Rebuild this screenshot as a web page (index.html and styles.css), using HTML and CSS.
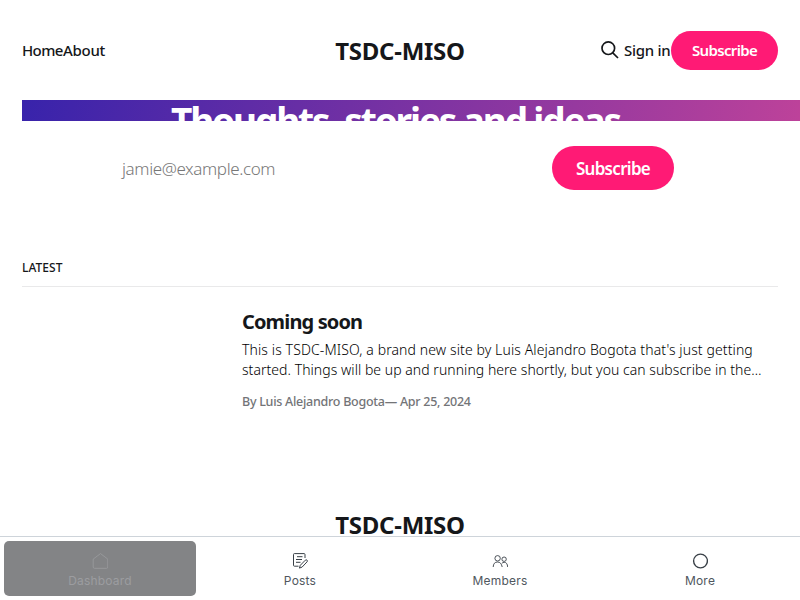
FILE: index.html
```html
<!DOCTYPE html>
<html lang="en">
<head>
<meta charset="utf-8">
<title>TSDC-MISO</title>
<link rel="stylesheet" href="styles.css">
</head>
<body>
<div class="site">
  <header class="header">
    <nav class="nav"><a class="home">Home</a><a class="about">About</a></nav>
    <div class="logo">TSDC-MISO</div>
    <div class="actions">
      <svg class="search" viewBox="0 0 20 20" fill="none" stroke="#15171a" stroke-width="1.7"><circle cx="8.3" cy="8.2" r="6.3"/><path d="M12.8 12.8 18 18"/></svg>
      <a class="signin">Sign in</a>
      <a class="button small"><span>Subscribe</span></a>
    </div>
  </header>
  <section class="cover"><h1><span>Thoughts, stories and ideas.</span></h1></section>
  <form class="signup">
    <span class="email">jamie@example.com</span>
    <a class="button large"><span>Subscribe</span></a>
  </form>
  <main class="latest">
    <h2 class="label"><span>LATEST</span></h2>
    <article class="post">
      <h3><span>Coming soon</span></h3>
      <p class="excerpt"><span class="line1">This is TSDC-MISO, a brand new site by Luis Alejandro Bogota that's just getting</span><br><span class="line2">started. Things will be up and running here shortly, but you can subscribe in the…</span></p>
      <p class="meta"><span>By Luis Alejandro Bogota— Apr 25, 2024</span></p>
    </article>
  </main>
  <footer class="footer"><div class="logo">TSDC-MISO</div></footer>
</div>
<nav class="tabs">
  <a class="tab active">
    <svg viewBox="0 0 16 16" fill="none" stroke="currentColor" stroke-width=".8"><path d="M1.200 6.100 8.500.6l7.300 5.500v8q0 1.200-1.200 1.200H2.400q-1.200 0-1.200-1.200z"/></svg>
    <span>Dashboard</span>
  </a>
  <a class="tab">
    <svg viewBox="0 0 16 16" fill="none" stroke="currentColor" stroke-width="1" stroke-linejoin="round"><path d="M13 5V1.500q0-.9-.9-.9H2.400q-.9 0-.9.900v10.800q0 .9.900.900H6.500M5 3.700h5.500M4 6.500h6M4 9.300h4.500M8.300 12.300l5-5.100q.9-.8 1.700-.1.800.8.100 1.700l-5 5.300-2.700 1z"/></svg>
    <span>Posts</span>
  </a>
  <a class="tab">
    <svg viewBox="0 0 16 16" fill="none" stroke="currentColor" stroke-width=".9"><circle cx="5.600" cy="5.300" r="2.700"/><circle cx="12.100" cy="6.200" r="2.200"/><path d="M1.200 14q.2-5 4.400-5 3.600 0 4.600 5M9.800 10.400q1-1.100 2.400-1.100 3.100 0 3.500 4.700"/></svg>
    <span>Members</span>
  </a>
  <a class="tab">
    <svg viewBox="0 0 16 16" fill="none" stroke="currentColor" stroke-width="1.400"><circle cx="8.500" cy="8" r="6.900"/></svg>
    <span>More</span>
  </a>
</nav>
</body>
</html>
```
FILE: styles.css
```css
* { box-sizing: border-box; }
body {
  margin: 0;
  height: 600px;
  overflow: hidden;
  display: flex;
  flex-direction: column;
  background: #fff;
  color: #15171a;
  font-family: "Noto Sans", "Open Sans", sans-serif;
}
h1, h2, h3, p { margin: 0; }
.site { height: 536px; overflow: hidden; }
.header {
  height: 100px;
  padding: 0 22px;
  display: grid;
  grid-template-columns: 1fr auto 1fr;
  align-items: center;
  font-size: 15px;
  font-weight: 500;
}
.nav { display: flex; }
.home { width: 41px; letter-spacing: -0.6px; }
.about { letter-spacing: -0.3px; }
.logo {
  font-size: 24px;
  line-height: 32px;
  font-weight: 700;
  letter-spacing: -0.25px;
  white-space: nowrap;
}
.header .logo { padding-top: 2px; }
.actions { display: flex; justify-content: flex-end; align-items: center; }
.search { width: 20px; height: 20px; margin-right: 4px; }
.signin { width: 47px; white-space: nowrap; letter-spacing: -0.3px; }
.button {
  display: flex;
  align-items: center;
  justify-content: center;
  border-radius: 30px;
  background: #ff1a75;
  color: #fff;
  font-weight: 600;
}
.small { width: 107px; height: 39px; font-size: 15px; letter-spacing: -0.65px; }
.large { width: 122px; height: 44px; font-size: 17px; letter-spacing: -0.7px; }
.cover {
  height: 21px;
  margin-left: 22px;
  overflow: hidden;
  background: linear-gradient(100deg, #3823ab, #bd429a);
}
h1 {
  padding-left: 149px;
  color: #fff;
  font-size: 37px;
  line-height: 41px;
  font-weight: 700;
  letter-spacing: -2.15px;
  white-space: nowrap;
}
.signup {
  height: 44px;
  margin: 25px 126px 0 122px;
  display: flex;
  align-items: center;
  justify-content: space-between;
}
.email { color: #777; font-size: 17px; font-weight: 300; letter-spacing: -0.38px; }
.latest { height: 319px; padding: 67px 22px 0; }
.label {
  height: 30px;
  border-bottom: 1px solid #e9e9ea;
  font-size: 12px;
  line-height: 21px;
  font-weight: 500;
  letter-spacing: 0.05px;
}
.post { padding: 22px 0 0 220px; white-space: nowrap; }
h3 { font-size: 20px; line-height: 26px; font-weight: 700; letter-spacing: -0.86px; }
.excerpt {
  margin-top: 5px;
  color: #000;
  font-size: 14px;
  line-height: 20px;
  font-weight: 300;
}
.line1 { letter-spacing: 0.11px; }
.line2 { letter-spacing: 0.045px; }
.meta {
  margin-top: 12px;
  color: #737477;
  font-size: 12.500px;
  line-height: 20px;
  font-weight: 500;
  letter-spacing: -0.27px;
}
.footer { display: flex; justify-content: center; }
.tabs {
  height: 64px;
  border-top: 1px solid #ced4da;
  padding: 4px;
  display: grid;
  grid-template-columns: repeat(4, 192px);
  gap: 8px;
  color: #394047;
  font-family: Inter, sans-serif;
  font-size: 12px;
}
.tab {
  height: 55px;
  padding-top: 12px;
  border-radius: 5px;
  display: flex;
  flex-direction: column;
  align-items: center;
  gap: 4px;
  line-height: 16px;
  letter-spacing: .2px;
}
.tab span { color: #50575e; }
.tab svg { width: 16px; height: 16px; }
.active { background: #838486; color: #9c9da0; }
.active span { color: #9c9da0; }
```
